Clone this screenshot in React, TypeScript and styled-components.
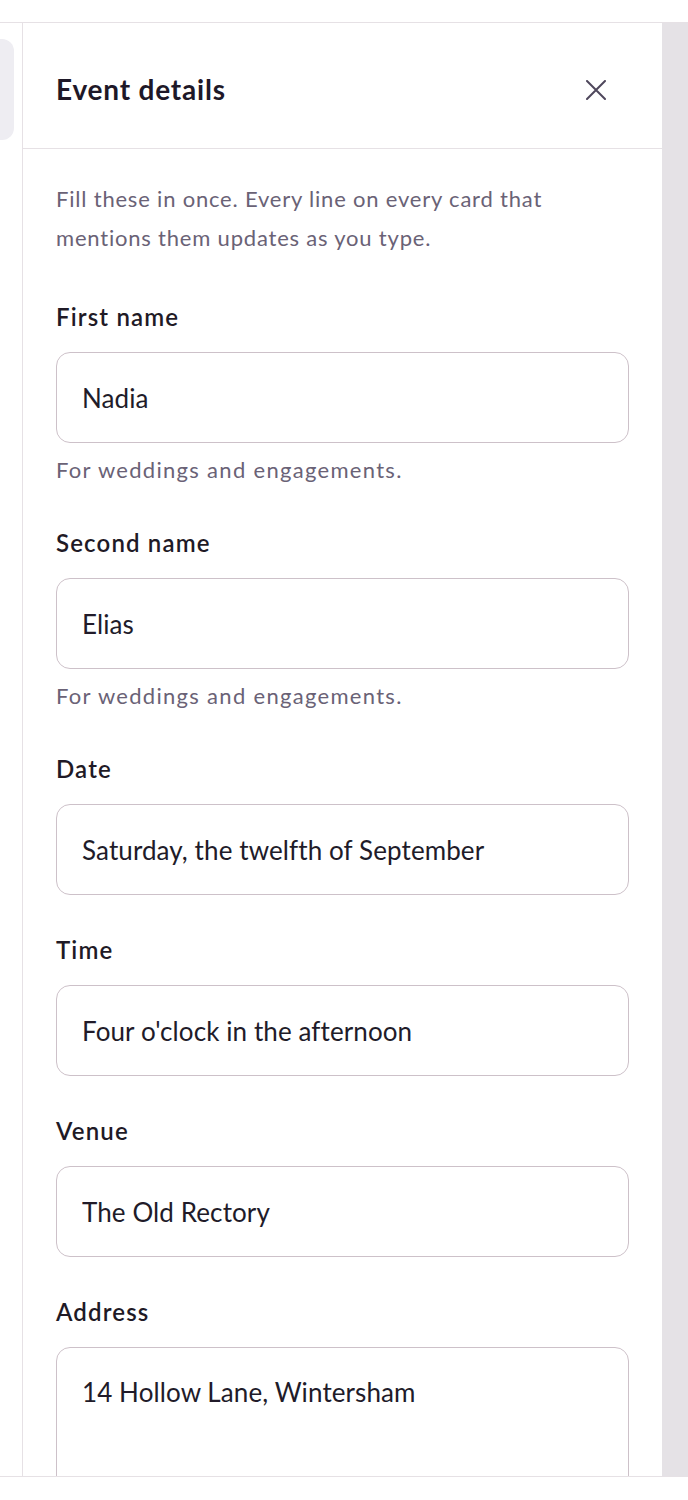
import React from "react";
import styled, { createGlobalStyle } from "styled-components";

const GlobalStyle = createGlobalStyle`
  html, body {
    margin: 0;
    padding: 0;
    background: #ffffff;
  }
  body {
    font-family: Lato, "Liberation Sans", sans-serif;
    color: #201a28;
  }
  * { box-sizing: border-box; }
`;

const Page = styled.div`
  padding-top: 22px;
  height: 1500px;
`;

const Frame = styled.div`
  display: grid;
  grid-template-columns: 22px 640px 26px;
  height: 1455px;
  border-top: 1px solid #e6e1e5;
  border-bottom: 1px solid #e6e1e5;
  overflow: hidden;
`;

const Rail = styled.div`
  overflow: hidden;
  padding-top: 16px;
`;

const RailCard = styled.div`
  margin-left: -20px;
  width: 34px;
  height: 101px;
  border-radius: 12px;
  background: #eeedf2;
`;

const Panel = styled.aside`
  display: flex;
  flex-direction: column;
  background: #ffffff;
  border-left: 1px solid #e6e1e5;
  overflow: hidden;
`;

const Backdrop = styled.div`
  background: #e5e2e6;
`;

const Header = styled.header`
  flex: none;
  height: 126px;
  padding: 7px 33px 0;
  display: flex;
  align-items: center;
  justify-content: space-between;
  border-bottom: 1px solid #e6e1e5;
`;

const Title = styled.h2`
  margin: 0;
  font-size: 28px;
  line-height: 34px;
  font-weight: 700;
  letter-spacing: 0.8px;
  color: #1e1828;
`;

const CloseButton = styled.button`
  width: 40px;
  height: 40px;
  margin-right: 13px;
  margin-top: 1px;
  padding: 0;
  border: 0;
  background: transparent;
  display: flex;
  align-items: center;
  justify-content: center;
  color: #4f475c;
  cursor: pointer;
`;

const Body = styled.div`
  padding: 31px 33px 0;
  display: flex;
  flex-direction: column;
`;

const Intro = styled.p`
  margin: 0 0 45px;
  font-size: 22px;
  line-height: 38.5px;
  letter-spacing: 0.8px;
  color: #6a6276;
`;

const Field = styled.div`
  display: flex;
  flex-direction: column;
  margin-bottom: 40px;
`;

const Label = styled.label`
  font-size: 24px;
  line-height: 30px;
  font-weight: 600;
  letter-spacing: 1.15px;
  color: #1f1a26;
  margin-bottom: 20px;
`;

const TextInput = styled.input`
  width: 100%;
  height: 91px;
  padding: 0 25px;
  border: 1px solid #cdc1c9;
  border-radius: 14px;
  background: #ffffff;
  font-family: Lato, "Liberation Sans", sans-serif;
  font-size: 26px;
  letter-spacing: 0.1px;
  color: #211b29;
  outline: none;
`;

const TextArea = styled.textarea`
  width: 100%;
  height: 220px;
  padding: 25px 25px;
  border: 1px solid #cdc1c9;
  border-radius: 14px;
  background: #ffffff;
  font-family: Lato, "Liberation Sans", sans-serif;
  font-size: 26px;
  line-height: 39px;
  letter-spacing: 0.1px;
  color: #211b29;
  outline: none;
  resize: none;
`;

const Hint = styled.p`
  margin: 8px 0 0;
  font-size: 22px;
  line-height: 37px;
  letter-spacing: 1.3px;
  color: #6a6276;
`;

type FieldDef = { label: string; value: string; hint?: string; multiline?: boolean };

const fields: FieldDef[] = [
  { label: "First name", value: "Nadia", hint: "For weddings and engagements." },
  { label: "Second name", value: "Elias", hint: "For weddings and engagements." },
  { label: "Date", value: "Saturday, the twelfth of September" },
  { label: "Time", value: "Four o'clock in the afternoon" },
  { label: "Venue", value: "The Old Rectory" },
  { label: "Address", value: "14 Hollow Lane, Wintersham", multiline: true },
];

export default function App() {
  return (
    <>
      <GlobalStyle />
      <Page>
        <Frame>
          <Rail>
            <RailCard />
          </Rail>
          <Panel>
            <Header>
              <Title>Event details</Title>
              <CloseButton aria-label="Close">
                <svg width="20" height="20" viewBox="0 0 20 20" fill="none" stroke="currentColor" strokeWidth="2" strokeLinecap="round">
                  <path d="M1 1 L19 19 M19 1 L1 19" />
                </svg>
              </CloseButton>
            </Header>
            <Body>
              <Intro>
                Fill these in once. Every line on every card that mentions them updates as you type.
              </Intro>
              {fields.map((f) => {
                const id = f.label.toLowerCase().replace(/\s+/g, "-");
                return (
                  <Field key={f.label}>
                    <Label htmlFor={id}>{f.label}</Label>
                    {f.multiline ? (
                      <TextArea id={id} defaultValue={f.value} />
                    ) : (
                      <TextInput id={id} defaultValue={f.value} />
                    )}
                    {f.hint && <Hint>{f.hint}</Hint>}
                  </Field>
                );
              })}
            </Body>
          </Panel>
          <Backdrop />
        </Frame>
      </Page>
    </>
  );
}
